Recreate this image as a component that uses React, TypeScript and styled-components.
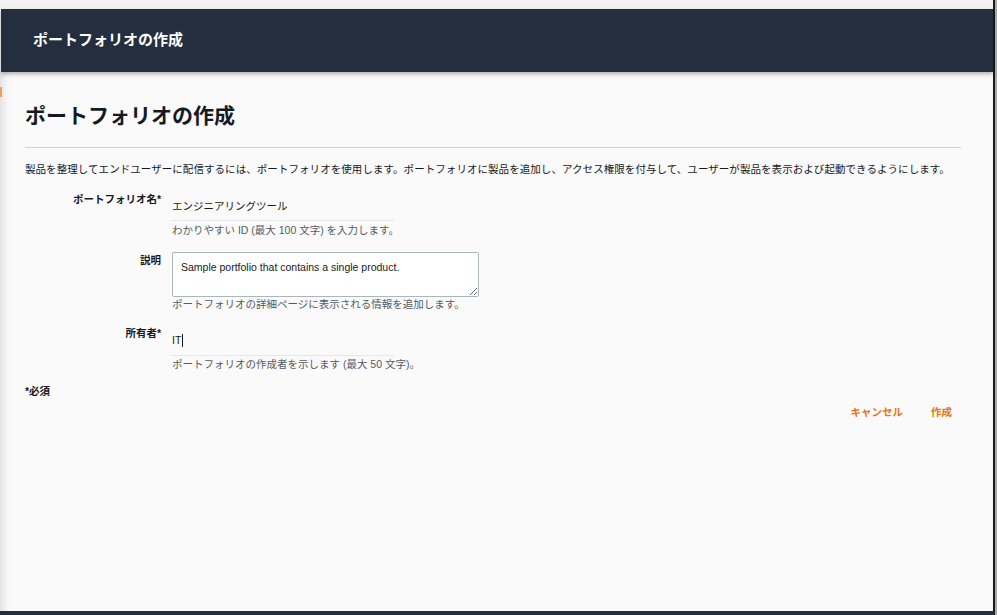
import React from 'react';
import styled, { createGlobalStyle } from 'styled-components';

const FONT = '"Liberation Sans", "Noto Sans CJK JP", sans-serif';

const GlobalStyle = createGlobalStyle`
  html, body {
    margin: 0;
    padding: 0;
    background: #a9a9a9;
    font-family: ${FONT};
  }
  * {
    box-sizing: border-box;
  }
`;

const App = (): JSX.Element => {
  return (
    <>
      <GlobalStyle />
      <Screen>
        <Window>
          <TopStrip />
          <Header>
            <HeaderTitle>ポートフォリオの作成</HeaderTitle>
          </Header>
          <Content>
            <PageTitle>ポートフォリオの作成</PageTitle>
            <Divider />
            <Intro>
              製品を整理してエンドユーザーに配信するには、ポートフォリオを使用します。ポートフォリオに製品を追加し、アクセス権限を付与して、ユーザーが製品を表示および起動できるようにします。
            </Intro>
            <Form>
              <Row>
                <Label>ポートフォリオ名*</Label>
                <Field>
                  <LineInput>エンジニアリングツール</LineInput>
                  <Hint>わかりやすい ID (最大 100 文字) を入力します。</Hint>
                </Field>
              </Row>
              <Row>
                <Label $offset={1}>説明</Label>
                <Field>
                  <TextArea
                    readOnly
                    defaultValue="Sample portfolio that contains a single product."
                  />
                  <Hint $gap={0}>ポートフォリオの詳細ページに表示される情報を追加します。</Hint>
                </Field>
              </Row>
              <Row>
                <Label>所有者*</Label>
                <Field>
                  <LineInput $tall>
                    IT
                    <Caret />
                  </LineInput>
                  <Hint $gap={1}>ポートフォリオの作成者を示します (最大 50 文字)。</Hint>
                </Field>
              </Row>
            </Form>
            <Required>*必須</Required>
            <Actions>
              <TextButton type="button">キャンセル</TextButton>
              <TextButton type="button">作成</TextButton>
            </Actions>
          </Content>
        </Window>
      </Screen>
    </>
  );
};

export default App;

const Screen = styled.div`
  width: 997px;
  height: 615px;
  display: flex;
  overflow: hidden;
`;

const Window = styled.div`
  width: 995px;
  height: 615px;
  display: flex;
  flex-direction: column;
  background: #fafafa;
  border-right: 2px solid #1b1b1b;
  border-bottom: 4px solid #232f3e;
`;

const TopStrip = styled.div`
  height: 9px;
  flex: none;
  background: #f3f3f3;
`;

const Header = styled.header`
  position: relative;
  z-index: 1;
  flex: none;
  height: 63px;
  margin: 0 0 0 1px;
  padding: 0 32px;
  display: flex;
  align-items: center;
  background: #232f3e;
  box-shadow: 0 2px 4px rgba(0, 0, 0, 0.3);
`;

const HeaderTitle = styled.h1`
  margin: 0 0 1px;
  font-size: 15px;
  line-height: 20px;
  font-weight: 700;
  color: #ffffff;
`;

const Content = styled.main`
  position: relative;
  flex: 1;
  padding: 30px 32px 0 25px;
  color: #16191f;
  box-shadow: inset 10px 0 8px -7px rgba(0, 0, 0, 0.12);

  &::before {
    content: '';
    position: absolute;
    left: 0;
    top: 15px;
    width: 2px;
    height: 10px;
    background: #f29b55;
  }
`;

const PageTitle = styled.h2`
  margin: 0;
  font-size: 21px;
  line-height: 28px;
  font-weight: 700;
  color: #16191f;
`;

const Divider = styled.hr`
  margin: 17px 0 0;
  border: 0;
  border-top: 1px solid #cfd2d3;
`;

const Intro = styled.p`
  margin: 14px 0 0;
  font-size: 10.5px;
  line-height: 14px;
  letter-spacing: 0.06px;
  color: #16191f;
  white-space: nowrap;
`;

const Form = styled.div`
  margin-top: 16px;
  display: flex;
  flex-direction: column;
  gap: 15px;
`;

const Row = styled.div`
  display: grid;
  grid-template-columns: 136px 1fr;
  column-gap: 11px;
`;

const Label = styled.div<{ $offset?: number }>`
  padding-top: ${({ $offset }) => $offset ?? 0}px;
  text-align: right;
  font-size: 10.5px;
  line-height: 14px;
  font-weight: 700;
  color: #16191f;
`;

const Field = styled.div`
  display: flex;
  flex-direction: column;
`;

const LineInput = styled.div<{ $tall?: boolean }>`
  width: 222px;
  display: flex;
  align-items: center;
  padding: 7px 0 ${({ $tall }) => ($tall ? '8px' : '7px')};
  font-size: 10.5px;
  line-height: 14px;
  color: #16191f;
  border-bottom: 1px solid #e4e7e8;
`;

const Caret = styled.span`
  display: inline-block;
  width: 1px;
  height: 13px;
  margin-left: 1px;
  background: #16191f;
`;

const TextArea = styled.textarea`
  display: block;
  width: 307px;
  height: 45px;
  padding: 7px 8px;
  font-family: ${FONT};
  font-size: 10.5px;
  line-height: 14px;
  color: #16191f;
  background: #ffffff;
  border: 1px solid #aab7b8;
  border-radius: 2px;
  outline: none;
  resize: vertical;
`;

const Hint = styled.div<{ $gap?: number }>`
  margin-top: ${({ $gap }) => $gap ?? 2}px;
  font-size: 10.5px;
  line-height: 14px;
  color: #545b64;
`;

const Required = styled.div`
  margin-top: 13px;
  font-size: 10.5px;
  line-height: 14px;
  font-weight: 700;
  color: #16191f;
`;

const Actions = styled.div`
  margin-top: 7px;
  display: flex;
  justify-content: flex-end;
  gap: 10px;
`;

const TextButton = styled.button`
  padding: 0 9px;
  border: 0;
  background: none;
  font-family: ${FONT};
  font-size: 10.5px;
  line-height: 14px;
  font-weight: 700;
  color: #ec7211;
  cursor: pointer;
`;
